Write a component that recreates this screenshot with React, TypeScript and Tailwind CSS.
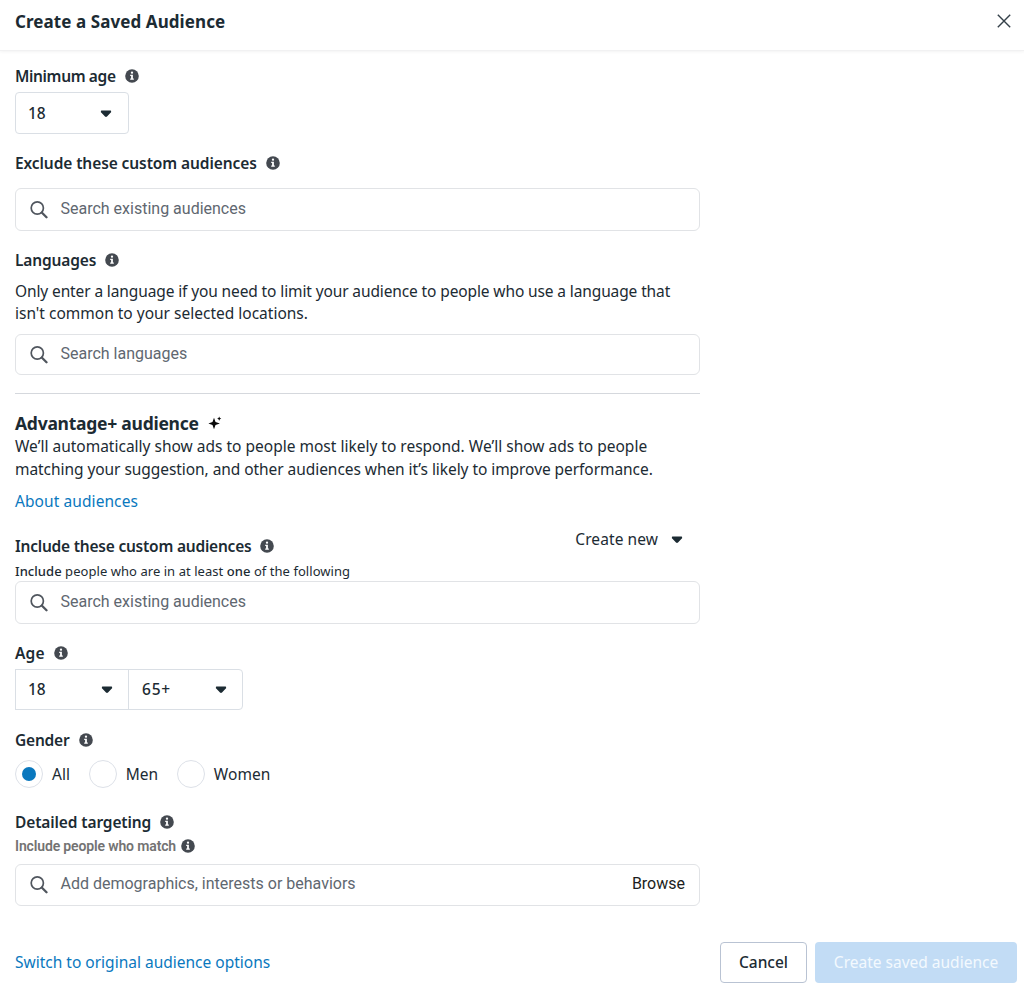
import { useState } from 'react';
import { clsx } from 'clsx';

const InfoIcon = () => (
  <svg viewBox="0 0 14 14" className="w-3.5 h-3.5 shrink-0">
    <circle cx="7" cy="7" r="6.8" fill="#444950" />
    <circle cx="7" cy="3.7" r="1.15" fill="#fff" />
    <path d="M5.2 5.7h2.7v3.9h.9v1.2H5.2V9.6h.9V6.9h-.9z" fill="#fff" />
  </svg>
);

const SearchIcon = () => (
  <svg viewBox="0 0 18 18" className="w-[18px] h-[18px] shrink-0" fill="none" stroke="#50565e">
    <circle cx="7.3" cy="7" r="6.1" strokeWidth="1.7" />
    <path d="M12 11.7l4.500 4.500" strokeWidth="2.300" strokeLinecap="round" />
  </svg>
);

const Caret = () => (
  <svg viewBox="0 0 12 8" className="w-3 h-2 shrink-0">
    <path d="M1.500.5h9c.4 0 .6.2.6.6v.8c0 .3-.1.500-.3.700L7 6.600c-.6.600-1.400.600-2 0L1.200 2.600c-.2-.2-.3-.4-.3-.7v-.8c0-.4.2-.6.6-.6z" fill="#1c2b33" />
  </svg>
);

const Sparkle = () => (
  <svg viewBox="0 0 14 14" className="w-3.5 h-3.5 shrink-0" fill="#0a0a0a">
    <path d="M6 1.800l1.500 4.200L11.900 7.500 7.500 9 6 13.200 4.500 9 .4 7.500 4.500 6z" />
    <path d="M11.200.6l.7 1.300 1.400.7-1.400.7-.7 1.400-.7-1.400-1.400-.7 1.400-.7z" />
  </svg>
);

interface LabelProps {
  text: string;
  className?: string;
}

const Label = ({ text, className }: LabelProps) => (
  <div className={clsx('flex items-center h-[22px] gap-[9px] whitespace-nowrap', className)}>
    <span className="pt-px font-semibold text-[15.5px]">{text}</span>
    <InfoIcon />
  </div>
);

interface SearchBoxProps {
  placeholder: string;
  className?: string;
  action?: string;
}

const SearchBox = ({ placeholder, className, action }: SearchBoxProps) => (
  <div
    className={clsx(
      'flex items-center border border-[#e1e3e6] rounded-md px-3.5 font-[Roboto,sans-serif] text-base',
      className
    )}
  >
    <SearchIcon />
    <span className="ml-[12.5px] pb-0.5 text-[#606770]">{placeholder}</span>
    {action && <button className="ml-auto pb-0.5 text-[#1c1e21]">{action}</button>}
  </div>
);

interface SelectProps {
  value: string;
  className?: string;
}

const Select = ({ value, className }: SelectProps) => (
  <button className={clsx('flex items-center justify-between border border-[#dadfe5] pl-3 text-[15.5px] font-medium', className)}>
    {value}
    <Caret />
  </button>
);

const genders = ['All', 'Men', 'Women'];

export default function App() {
  const [gender, setGender] = useState('All');

  return (
    <div className="w-[1024px] h-[991px] overflow-hidden bg-white text-[#1c2b33] font-['Noto_Sans',sans-serif]">
      <header className="flex items-center justify-between h-[51px] pl-[15px] pr-[13px] pb-[9px] border-b border-[#f1f1f2] shadow-[0_1px_3px_rgba(0,0,0,0.05)]">
        <h1 className="pt-0.5 font-bold text-[17px] tracking-[0.08px]">Create a Saved Audience</h1>
        <svg viewBox="0 0 14 14" className="w-3.5 h-3.5" stroke="#344049" strokeWidth="1.4">
          <path d="M.8.8l12.400 12.400M13.200.8L.8 13.200" />
        </svg>
      </header>

      <main className="w-[700px] pl-[15px] pt-3.5">
        <Label text="Minimum age" className="tracking-[-0.36px]" />
        <Select value="18" className="mt-[5px] w-[114px] h-[42px] pt-px pr-4 rounded" />

        <Label text="Exclude these custom audiences" className="mt-[18px] tracking-[-0.09px]" />
        <SearchBox placeholder="Search existing audiences" className="mt-3.5 h-[43px]" />

        <Label text="Languages" className="mt-[18px] tracking-[-0.15px]" />
        <p className="mt-[9px] text-[15.5px] leading-[22px] whitespace-nowrap">
          <span className="tracking-[-0.12px]">
            Only enter a language if you need to limit your audience to people who use a language that
          </span>
          <br />
          isn't common to your selected locations.
        </p>
        <SearchBox placeholder="Search languages" className="mt-2.5 h-[41px]" />

        <hr className="mt-[18px] border-[#d5d8dd]" />

        <div className="mt-[18px] flex items-center h-[22px] gap-[9px]">
          <h2 className="font-bold text-[17.5px] tracking-[-0.26px]">Advantage+ audience</h2>
          <Sparkle />
        </div>
        <p className="mt-px text-[15.5px] leading-[23px] whitespace-nowrap">
          We’ll automatically show ads to people most likely to respond. We’ll show ads to people
          <br />
          <span className="tracking-[-0.06px]">
            matching your suggestion, and other audiences when it’s likely to improve performance.
          </span>
        </p>
        <a className="mt-[9px] block w-fit h-[22px] leading-[22px] text-[15.5px] tracking-[0.08px] text-[#0a78be]">About audiences</a>

        <div className="mt-[17px] flex justify-between pr-[17px]">
          <Label text="Include these custom audiences" className="mt-1.5 tracking-[-0.22px]" />
          <button className="flex items-center h-[22px] gap-[13px] text-[15.5px] tracking-[0.08px]">
            Create new
            <Caret />
          </button>
        </div>
        <p className="mt-[5px] h-[18px] leading-[18px] text-[13px] tracking-[0.05px]">
          <span className="font-medium">Include</span> people who are in at least <span className="font-medium">one</span> of the following
        </p>
        <SearchBox placeholder="Search existing audiences" className="mt-px h-[43px]" />

        <Label text="Age" className="mt-[18px] tracking-[0.2px]" />
        <div className="mt-[5px] flex">
          <Select value="18" className="w-[114px] h-[41px] pr-[15px]" />
          <Select value="65+" className="w-[115px] h-[41px] -ml-px pl-[13px] pr-[15px] rounded-r tracking-[0.8px]" />
        </div>

        <Label text="Gender" className="mt-[19px] tracking-[-0.2px]" />
        <div className="mt-[9px] flex gap-[18.5px]">
          {genders.map((g) => (
            <button key={g} onClick={() => setGender(g)} className="flex items-center gap-[9px] text-[15.5px] tracking-[0.08px]">
              <span className="flex items-center justify-center w-7 h-7 rounded-full border border-[#dde1e8]">
                {gender === g && <span className="w-3.5 h-3.5 rounded-full bg-[#0a78be]" />}
              </span>
              <span className="pt-px">{g}</span>
            </button>
          ))}
        </div>

        <Label text="Detailed targeting" className="mt-[23px] tracking-[-0.12px]" />
        <div className="mt-[4px] flex items-center h-[18px] gap-[5px]">
          <span className="font-[Roboto,sans-serif] font-semibold text-[14px] tracking-[-0.14px] text-[#737373]">Include people who match</span>
          <InfoIcon />
        </div>
        <SearchBox placeholder="Add demographics, interests or behaviors" action="Browse" className="mt-[9px] h-[42px]" />
      </main>

      <footer className="mt-9 flex items-center pl-[15px] pr-[7px] text-[15.5px]">
        <a className="text-[#0a78be]">Switch to original audience options</a>
        <button className="ml-auto w-[87px] h-[41px] border border-[#b9c3d3] rounded pt-px font-medium">Cancel</button>
        <button className="ml-2 w-[202px] h-[41px] rounded bg-[#c2dcf5] pt-px text-[#f3f9fe]">Create saved audience</button>
      </footer>
    </div>
  );
}
